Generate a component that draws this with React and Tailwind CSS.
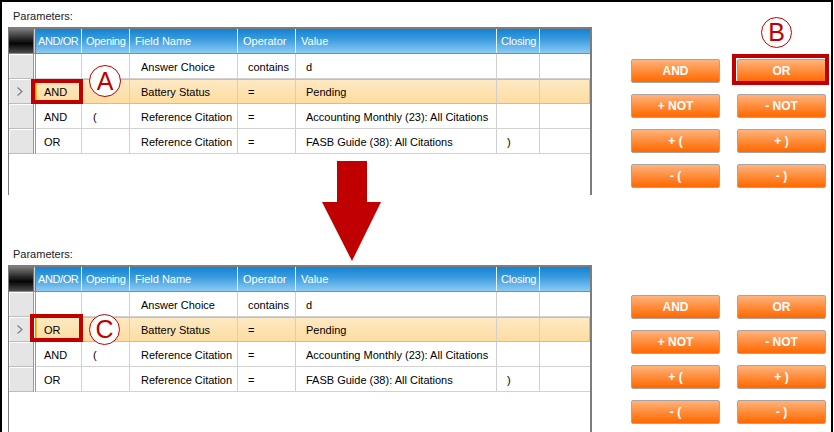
import React from "react";

const cols = [
  { key: "andor", label: "AND/OR", w: "w-[46px]", pad: "pl-[8px]", hpad: "pl-[2px] tracking-[-0.4px]" },
  { key: "open", label: "Opening", w: "w-[48px]", pad: "pl-[11px]", hpad: "pl-[4px] tracking-[-0.3px]" },
  { key: "field", label: "Field Name", w: "w-[108px]", pad: "pl-[11px]", hpad: "pl-[5px]" },
  { key: "op", label: "Operator", w: "w-[58px]", pad: "pl-[10px]", hpad: "pl-[5px]" },
  { key: "value", label: "Value", w: "w-[201px]", pad: "pl-[10px]", hpad: "pl-[5px]" },
  { key: "close", label: "Closing", w: "w-[43px]", pad: "pl-[10px]", hpad: "pl-[4px] tracking-[-0.2px]" },
];

const buttons = ["AND", "OR", "+ NOT", "- NOT", "+ (", "+ )", "- (", "- )"];

function makeRows(op) {
  return [
    { andor: "", open: "", field: "Answer Choice", op: "contains", value: "d", close: "" },
    { andor: op, open: "", field: "Battery Status", op: "=", value: "Pending", close: "", selected: true },
    { andor: "AND", open: "(", field: "Reference Citation", op: "=", value: "Accounting Monthly (23): All Citations", close: "" },
    { andor: "OR", open: "", field: "Reference Citation", op: "=", value: "FASB Guide (38): All Citations", close: ")" },
  ];
}

function ParamGrid({ rows, height }) {
  return (
    <div className={`ml-[6px] w-[584px] border-t-2 border-l border-r-2 border-[#7d7d7d] ${height}`}>
      {/* Header */}
      <div className="flex h-[25px] border-b border-[#8a8a8a]">
        <div className="w-[24px] bg-[linear-gradient(to_bottom,#7a7a7a,#2a2a2a_40%,#050505_60%,#4a4a4a)]" />
        <div className="w-[3px] border-x border-[#777] bg-[#cfcfcf]" />
        <div className="flex flex-1 bg-[linear-gradient(to_bottom,#1382d2,#3d9de0_45%,#8ccbf3)]">
          {cols.map((c) => (
            <div
              key={c.key}
              className={`${c.w} ${c.hpad} flex items-center whitespace-nowrap border-r border-[#e8f4fc] pt-[1px] text-[11px] text-white`}
            >
              {c.label}
            </div>
          ))}
          <div className="flex-1" />
        </div>
      </div>

      {/* Rows */}
      {rows.map((r, i) => (
        <div key={i} className="flex h-[25px]">
          <div className="w-[24px] flex items-center justify-center border-b border-[#bdbdbd] bg-[#e5e5e5] shadow-[inset_1px_1px_0_#fff]">
            {r.selected && (
              <svg width="6" height="9" viewBox="0 0 6 9" className="ml-[-2px]">
                <polyline points="0.5,0.5 5,4.5 0.5,8.5" fill="none" stroke="#7a7a7a" strokeWidth="1.1" />
              </svg>
            )}
          </div>
          <div className="w-[3px] border-x border-[#9a9a9a] bg-white" />
          <div
            className={`flex flex-1 ${
              r.selected
                ? "bg-[linear-gradient(to_bottom,#fee9c4,#fddc9f)] outline outline-1 -outline-offset-1 outline-[#f2c423]"
                : "border-b border-[#d2d2d2] bg-white"
            }`}
          >
            {cols.map((c) => (
              <div
                key={c.key}
                className={`${c.w} ${c.pad} flex items-center whitespace-nowrap border-r border-[#cfcfcf] pt-[2px] text-[11px] text-black`}
              >
                {r[c.key]}
              </div>
            ))}
            <div className="flex-1" />
          </div>
        </div>
      ))}
    </div>
  );
}

function Section({ op, gridHeight, buttonPad }) {
  return (
    <div className="flex">
      <div className="w-[590px]">
        <div className="h-[25px] pt-[7px] pl-[11px] text-[11px] leading-[14px] text-[#222]">Parameters:</div>
        <ParamGrid rows={makeRows(op)} height={gridHeight} />
      </div>
      <div className={`ml-[39px] ${buttonPad} grid grid-cols-[89px_89px] gap-x-[17px] gap-y-[11px] content-start`}>
        {buttons.map((b) => (
          <button
            key={b}
            className="h-[24px] rounded-[2px] border border-[#aaa49e] bg-[linear-gradient(to_bottom,#ffb37e,#ff8c3a_50%,#ff6800)] text-[12px] font-bold text-white"
          >
            {b}
          </button>
        ))}
      </div>
    </div>
  );
}

function Marker({ letter, className }) {
  return (
    <div
      className={`absolute flex items-center justify-center rounded-full border-[1.5px] border-[#c00000] bg-white text-[25px] leading-none text-[#c00000] ${className}`}
    >
      {letter}
    </div>
  );
}

export default function App() {
  return (
    <div className="relative h-[432px] w-[833px] overflow-hidden border-l-2 border-r-2 border-t-2 border-black bg-white font-['Liberation_Sans',Arial,sans-serif]">
      <Section op="AND" gridHeight="h-[168px]" buttonPad="pt-[57px]" />
      <div className="h-[45px]" />
      <Section op="OR" gridHeight="h-[170px]" buttonPad="pt-[55px]" />

      {/* Annotations */}
      <div className="absolute left-[29px] top-[77px] h-[25px] w-[52px] border-4 border-[#c00000]" />
      <div className="absolute left-[730px] top-[52px] h-[31px] w-[97px] border-4 border-[#c00000]" />
      <div className="absolute left-[28px] top-[312px] h-[28px] w-[53px] border-4 border-[#c00000]" />

      <Marker letter="A" className="left-[87px] top-[63px] h-[32px] w-[32px]" />
      <Marker letter="B" className="left-[759px] top-[15px] h-[31px] w-[31px]" />
      <Marker letter="C" className="left-[87px] top-[312px] h-[31px] w-[31px]" />

      <svg className="absolute left-[319px] top-[158px]" width="61" height="102" viewBox="0 0 61 102">
        <polygon points="16,1 46,1 46,42 60,42 31,101 1,42 16,42" fill="#c00000" />
      </svg>
    </div>
  );
}
